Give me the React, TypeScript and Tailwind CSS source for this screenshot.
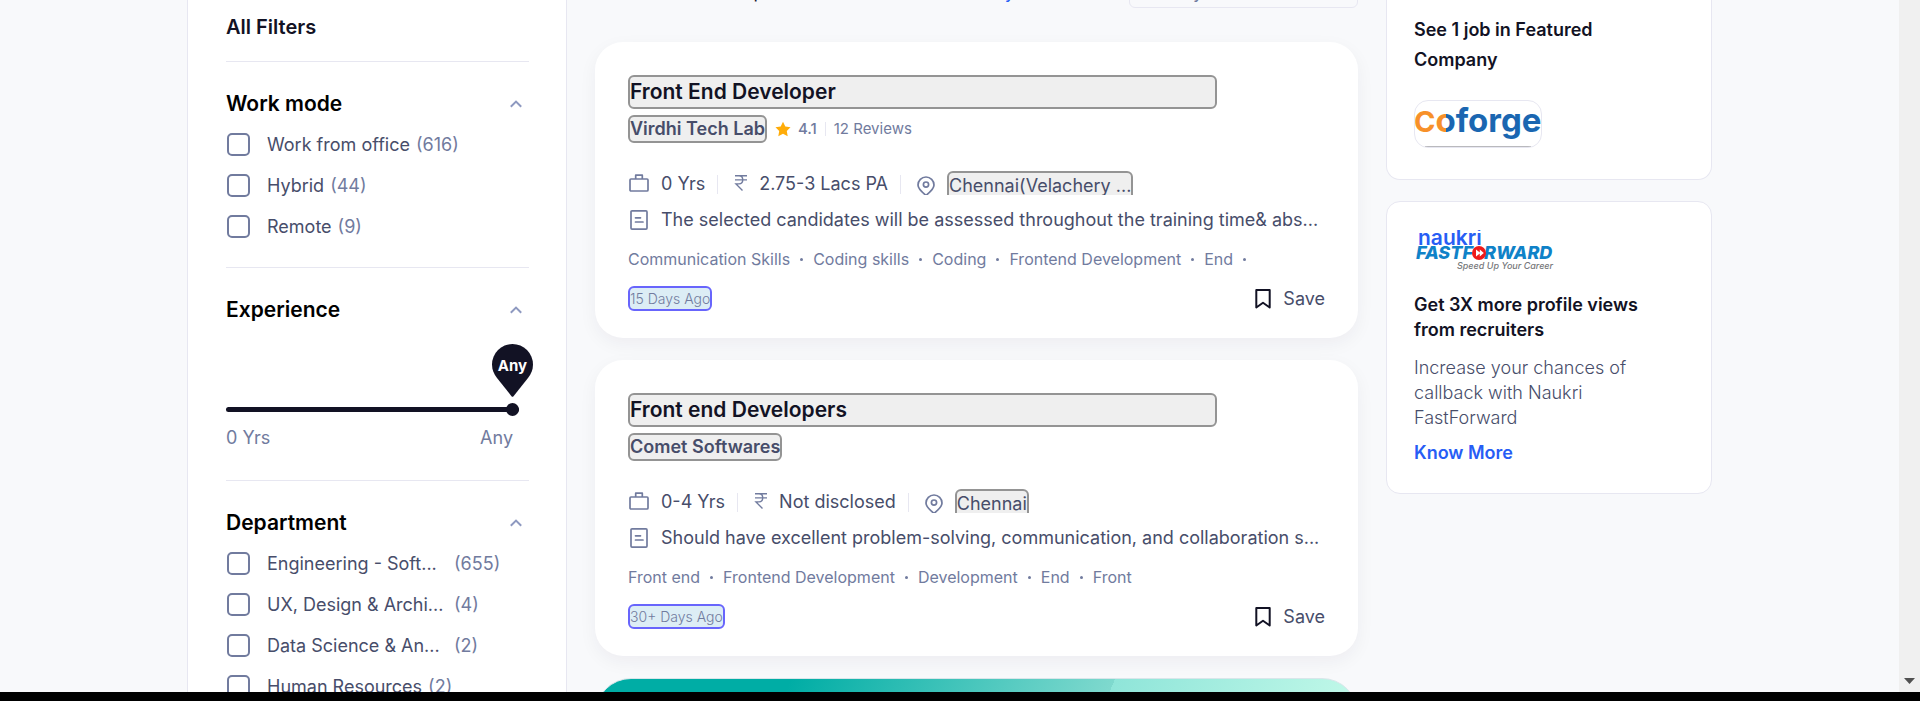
import React from "react";

type FilterOption = { label: string; count: number };

type Job = {
  title: string;
  company: string;
  rating?: string;
  reviews?: string;
  experience: string;
  salary: string;
  location: string;
  summary: string;
  skills: string[];
  moreSkills?: boolean;
  posted: string;
};

const workModes: FilterOption[] = [
  { label: "Work from office", count: 616 },
  { label: "Hybrid", count: 44 },
  { label: "Remote", count: 9 },
];

const departments: FilterOption[] = [
  { label: "Engineering - Soft...", count: 655 },
  { label: "UX, Design & Archi...", count: 4 },
  { label: "Data Science & An...", count: 2 },
  { label: "Human Resources", count: 2 },
];

const jobs: Job[] = [
  {
    title: "Front End Developer",
    company: "Virdhi Tech Lab",
    rating: "4.1",
    reviews: "12 Reviews",
    experience: "0 Yrs",
    salary: "2.75-3 Lacs PA",
    location: "Chennai(Velachery ...",
    summary: "The selected candidates will be assessed throughout the training time& abs...",
    skills: ["Communication Skills", "Coding skills", "Coding", "Frontend Development", "End"],
    moreSkills: true,
    posted: "15 Days Ago",
  },
  {
    title: "Front end Developers",
    company: "Comet Softwares",
    experience: "0-4 Yrs",
    salary: "Not disclosed",
    location: "Chennai",
    summary: "Should have excellent problem-solving, communication, and collaboration s...",
    skills: ["Front end", "Frontend Development", "Development", "End", "Front"],
    posted: "30+ Days Ago",
  },
];

function ChevronUp() {
  return (
    <svg className="h-2 w-3" viewBox="0 0 12 8" fill="none" stroke="#8e99c0" strokeWidth="2" aria-hidden="true">
      <path d="M0.8 6.8 6 1.6l5.2 5.2" />
    </svg>
  );
}

function BriefcaseIcon() {
  return (
    <svg className="h-5 w-[22px] shrink-0" viewBox="0 0 22 20" fill="none" stroke="#717b9e" strokeWidth="1.7" strokeLinejoin="round" aria-hidden="true">
      <rect x="2" y="5" width="18" height="12" rx="1" />
      <path d="M7.700 5V1.200h6.600V5" />
    </svg>
  );
}

function RupeeIcon() {
  return (
    <svg className="h-5 w-3.5 shrink-0" viewBox="0 0 14 20" fill="none" stroke="#717b9e" strokeWidth="1.4" aria-hidden="true">
      <path d="M1 1.700h12M1 5.900h12M1 1.700h4c5 0 5 8.200 0 8.200H2l6.500 6.500" />
    </svg>
  );
}

function PinIcon() {
  return (
    <svg className="h-5 w-[18px] shrink-0" viewBox="0 0 18 20" fill="none" stroke="#717b9e" strokeWidth="1.7" aria-hidden="true">
      <path d="M9 19.400C5 16.200 1 13 1 9a8 8 0 0 1 16 0c0 4-4 7.200-8 10.400Z" />
      <circle cx="9" cy="8.600" r="2.600" />
    </svg>
  );
}

function NoteIcon() {
  return (
    <svg className="h-5 w-[22px] shrink-0" viewBox="0 0 22 20" fill="none" stroke="#717b9e" strokeWidth="1.700" aria-hidden="true">
      <rect x="3" y="0.900" width="16" height="18.200" rx="1" />
      <path d="M7.500 7.800h5M7.500 12h7.500" strokeLinecap="round" />
    </svg>
  );
}

function BookmarkIcon() {
  return (
    <svg className="h-5 w-4 shrink-0" viewBox="0 0 16 20" fill="none" stroke="#121224" strokeWidth="2" strokeLinejoin="round" aria-hidden="true">
      <path d="M1.300 1h13.400v17.500L8 13.800l-6.700 4.700Z" />
    </svg>
  );
}

function StarIcon() {
  return (
    <svg className="h-4 w-4 shrink-0" viewBox="0 0 16 16" fill="#ffac09" aria-hidden="true">
      <path d="m8 .8 2.300 4.700 5.200.8-3.700 3.600.9 5.300L8 12.700l-4.700 2.500.9-5.300L.5 6.300l5.200-.8Z" />
    </svg>
  );
}

function SectionHeading({ children }: { children: string }) {
  return (
    <div className="flex h-[30px] items-center justify-between pr-[7px]">
      <h2 className="text-[21px] font-semibold leading-[30px] text-black">{children}</h2>
      <button type="button" aria-label={`Collapse ${children}`}>
        <ChevronUp />
      </button>
    </div>
  );
}

function OptionList({ options, wide = false }: { options: FilterOption[]; wide?: boolean }) {
  return (
    <ul className="mt-[5px]">
      {options.map((option) => (
        <li key={option.label} className="h-[41px]">
          <label className="flex h-full items-center pl-px text-[18px] text-[#474d6a]">
            <input
              type="checkbox"
              className="mr-[17px] size-[23px] appearance-none rounded-[5px] border-2 border-[#717b9e] bg-white checked:bg-[#717b9e]"
            />
            <span className={wide && option.label.endsWith("...") ? "w-[181px] whitespace-nowrap" : ""}>{option.label}</span>
            <span className="ml-[6px] text-[#717b9e]">({option.count})</span>
          </label>
        </li>
      ))}
    </ul>
  );
}

function Filters() {
  return (
    <aside className="w-[380px] shrink-0 border-x border-[#e7e7f1] bg-white pl-[38px] pr-[37px]">
      <h1 className="mt-3 pb-[19px] text-[20px] font-semibold leading-[30px] text-[#121224]">All Filters</h1>
      <section className="border-t border-[#e7e7f1] pb-5 pt-[27px]">
        <SectionHeading>Work mode</SectionHeading>
        <OptionList options={workModes} />
      </section>
      <section className="border-t border-[#e7e7f1] pb-[30px] pt-[27px]">
        <SectionHeading>Experience</SectionHeading>
        <div className="-mr-1 mt-[19px] flex justify-end">
          <div className="relative h-[53px] w-[41px]">
            <svg className="h-full w-full" viewBox="0 0 41 53" fill="#121224" aria-hidden="true">
              <path d="M20.500 0A20.500 20.500 0 0 0 0 20.500c0 5.500 2 9.600 5 13.500l14.500 18.200q1 1 2 0L36 34c3-3.900 5-8 5-13.500A20.500 20.500 0 0 0 20.500 0Z" />
            </svg>
            <span className="absolute inset-x-0 top-[10px] text-center text-[15px] font-bold leading-6 text-white">Any</span>
          </div>
        </div>
        <input
          type="range"
          min={0}
          max={30}
          defaultValue={30}
          aria-label="Experience in years"
          className="mr-[10px] mt-[6px] block h-[13px] w-[293px] appearance-none bg-transparent [&::-webkit-slider-runnable-track]:h-[5px] [&::-webkit-slider-runnable-track]:rounded-full [&::-webkit-slider-runnable-track]:bg-[#121224] [&::-webkit-slider-thumb]:-mt-1 [&::-webkit-slider-thumb]:size-[13px] [&::-webkit-slider-thumb]:appearance-none [&::-webkit-slider-thumb]:rounded-full [&::-webkit-slider-thumb]:bg-[#121224]"
        />
        <div className="mt-[10px] flex justify-between pr-4 text-[18px] leading-6 text-[#717b9e]">
          <span>0 Yrs</span>
          <span>Any</span>
        </div>
      </section>
      <section className="border-t border-[#e7e7f1] pb-5 pt-[27px]">
        <SectionHeading>Department</SectionHeading>
        <OptionList options={departments} wide />
      </section>
    </aside>
  );
}

function Divider() {
  return <span className="ml-3 mr-4 h-[19px] w-px bg-[#e7e7f1]" />;
}

function JobCard({ job }: { job: Job }) {
  return (
    <article className="rounded-[28px] bg-white px-[33px] pb-[27px] pt-[33px] shadow-[0_6px_18px_rgba(30,10,58,0.05)]">
      <button
        type="button"
        className="block h-[34px] w-full max-w-[589px] rounded-md border-2 border-[#949494] bg-[#efefef] text-left text-[21px] font-semibold leading-[30px] text-[#121224]"
      >
        {job.title}
      </button>
      <div className="mt-[6px] flex items-center">
        <button
          type="button"
          className="h-7 rounded-md border-2 border-[#949494] bg-[#efefef] text-[18px] font-semibold leading-6 text-[#474d6a]"
        >
          {job.company}
        </button>
        {job.rating && (
          <div className="ml-2 flex items-center text-[15px] text-[#717b9e]">
            <StarIcon />
            <span className="ml-[7px] font-medium">{job.rating}</span>
            <span className="mx-2 h-[14px] w-px bg-[#e7e7f1]" />
            <a href="#reviews">{job.reviews}</a>
          </div>
        )}
      </div>
      <div className="mt-7 flex h-6 items-start overflow-hidden text-[18px] leading-6 text-[#474d6a]">
        <div className="flex items-center pt-px">
          <BriefcaseIcon />
          <span className="ml-[11px]">{job.experience}</span>
          <Divider />
          <RupeeIcon />
          <span className="ml-[11px]">{job.salary}</span>
          <Divider />
        </div>
        <span className="pt-[5px]">
          <PinIcon />
        </span>
        <button
          type="button"
          className="ml-3 h-[30px] rounded-md border-2 border-[#949494] bg-[#efefef] leading-[26px] text-[#474d6a]"
        >
          {job.location}
        </button>
      </div>
      <p className="mt-[13px] flex items-center text-[18px] leading-6 text-[#474d6a]">
        <NoteIcon />
        <span className="ml-[11px] whitespace-nowrap">{job.summary}</span>
      </p>
      <ul className="mt-[17px] flex items-center text-[16px] leading-5 text-[#717b9e]">
        {job.skills.map((skill, i) => (
          <li key={skill} className="flex items-center">
            {skill}
            {(i < job.skills.length - 1 || job.moreSkills) && (
              <span className="mx-[10px] size-[3px] rounded-full bg-[#717b9e]" />
            )}
          </li>
        ))}
      </ul>
      <div className="mt-[17px] flex h-[25px] items-center justify-between">
        <span className="h-[25px] rounded-md border-2 border-[#6865fc] bg-[#dcedf5] text-[14px] font-light leading-[21px] text-[#717b9e]">
          {job.posted}
        </span>
        <button type="button" className="flex items-center gap-3 text-[18px] text-[#474d6a]">
          <BookmarkIcon />
          Save
        </button>
      </div>
    </article>
  );
}

function CoforgeLogo() {
  return (
    <svg className="h-full w-full" viewBox="0 0 126 46" role="img" aria-label="Coforge">
      <defs>
        <linearGradient id="coforge" gradientUnits="userSpaceOnUse" x1="0" y1="0" x2="126" y2="0">
          <stop offset="0.250" stopColor="#f7902a" />
          <stop offset="0.250" stopColor="#1b66b1" />
        </linearGradient>
      </defs>
      <text x="-1" y="31" fontFamily="Inter, sans-serif" fontWeight="700" fill="url(#coforge)">
        <tspan fontSize="29">C</tspan>
        <tspan fontSize="33">oforge</tspan>
      </text>
      <path d="M10 45.500h106" stroke="#b9b9bd" />
    </svg>
  );
}

function FastForwardLogo() {
  return (
    <svg className="h-[42px] w-[142px]" viewBox="0 0 142 42" role="img" aria-label="Naukri FastForward, Speed Up Your Career">
      <text x="4" y="15" fontFamily="Inter, sans-serif" fontSize="21" fontWeight="600" fill="#275df5">
        naukri
      </text>
      <g fontFamily="Inter, sans-serif" fontSize="18" fontWeight="800" fontStyle="italic" fill="#0f82c8">
        <text x="2" y="29">FASTF</text>
        <text x="70" y="29">RWARD</text>
      </g>
      <circle cx="65" cy="23" r="7" fill="#ee1b1b" />
      <path d="m62 19.500 3.800 3v-3l4 3.500-4 3.500v-3l-3.800 3Z" fill="#fff" />
      <text x="43" y="39" fontFamily="Inter, sans-serif" fontSize="9" fontWeight="500" fontStyle="italic" fill="#77787b">
        Speed Up Your Career
      </text>
    </svg>
  );
}

function Promotions() {
  return (
    <aside className="w-[326px] shrink-0">
      <section className="rounded-b-[14px] border border-t-0 border-[#e7e7f1] bg-white px-[27px] pb-[31px] pt-[15px]">
        <h2 className="text-[18px] font-semibold leading-[30px] text-[#121224]">
          See 1 job in Featured
          <br />
          Company
        </h2>
        <a href="#coforge" className="mt-[25px] block h-12 w-32 overflow-hidden rounded-[14px] border border-[#e7e7f1]">
          <CoforgeLogo />
        </a>
      </section>
      <section className="mt-[21px] rounded-[14px] border border-[#e7e7f1] bg-white px-[27px] pb-7 pt-7">
        <FastForwardLogo />
        <h2 className="mt-5 text-[18px] font-semibold leading-[25px] text-[#121224]">
          Get 3X more profile views
          <br />
          from recruiters
        </h2>
        <p className="mt-[13px] text-[18px] font-light leading-[25px] text-[#474d6a]">
          Increase your chances of
          <br />
          callback with Naukri
          <br />
          FastForward
        </p>
        <a href="#fastforward" className="mt-[10px] block text-[18px] font-semibold leading-[25px] text-[#275df5]">
          Know More
        </a>
      </section>
    </aside>
  );
}

export default function App() {
  return (
    <div className="flex h-screen flex-col bg-black font-['Inter',sans-serif]">
      <div className="flex min-h-0 flex-1 overflow-hidden bg-[#f8f9fb]">
        <div className="min-w-0 flex-1 overflow-hidden">
          <div className="mx-auto flex w-full max-w-[1525px] gap-7">
            <Filters />
            <main className="min-w-0 flex-1">
              <div className="flex h-2 items-end justify-end overflow-hidden text-[18px] leading-6">
                <span className="mb-1 shrink-0 text-[#121224]">Developer Jobs</span>
                <a href="#chennai" className="mb-1 ml-[60px] mr-[114px] shrink-0 text-[#275df5]">
                  In Chennai city
                </a>
                <button
                  type="button"
                  className="flex h-[38px] w-[229px] shrink-0 items-center rounded-md border border-[#e7e7f1] px-3 pt-[6px] text-[#717b9e]"
                >
                  Sort by
                </button>
              </div>
              <div className="mt-[34px] flex flex-col gap-[22px]">
                {jobs.map((job) => (
                  <JobCard key={job.title} job={job} />
                ))}
                <div className="h-[120px] rounded-[36px] border border-[#d9e6ea] bg-[linear-gradient(113deg,#00ada5_24%,#7fd9ce_64%,#8fe5d9_64%,#c6faea_98%)]" />
              </div>
            </main>
            <Promotions />
          </div>
        </div>
        <div className="flex w-[21px] shrink-0 items-end justify-center bg-[#f0f0f0] pb-2">
          <svg className="h-[6px] w-[11px]" viewBox="0 0 11 6" fill="#505050" aria-hidden="true">
            <path d="M0 0h11L5.500 6Z" />
          </svg>
        </div>
      </div>
      <div className="h-[9px] shrink-0 bg-black" />
    </div>
  );
}
